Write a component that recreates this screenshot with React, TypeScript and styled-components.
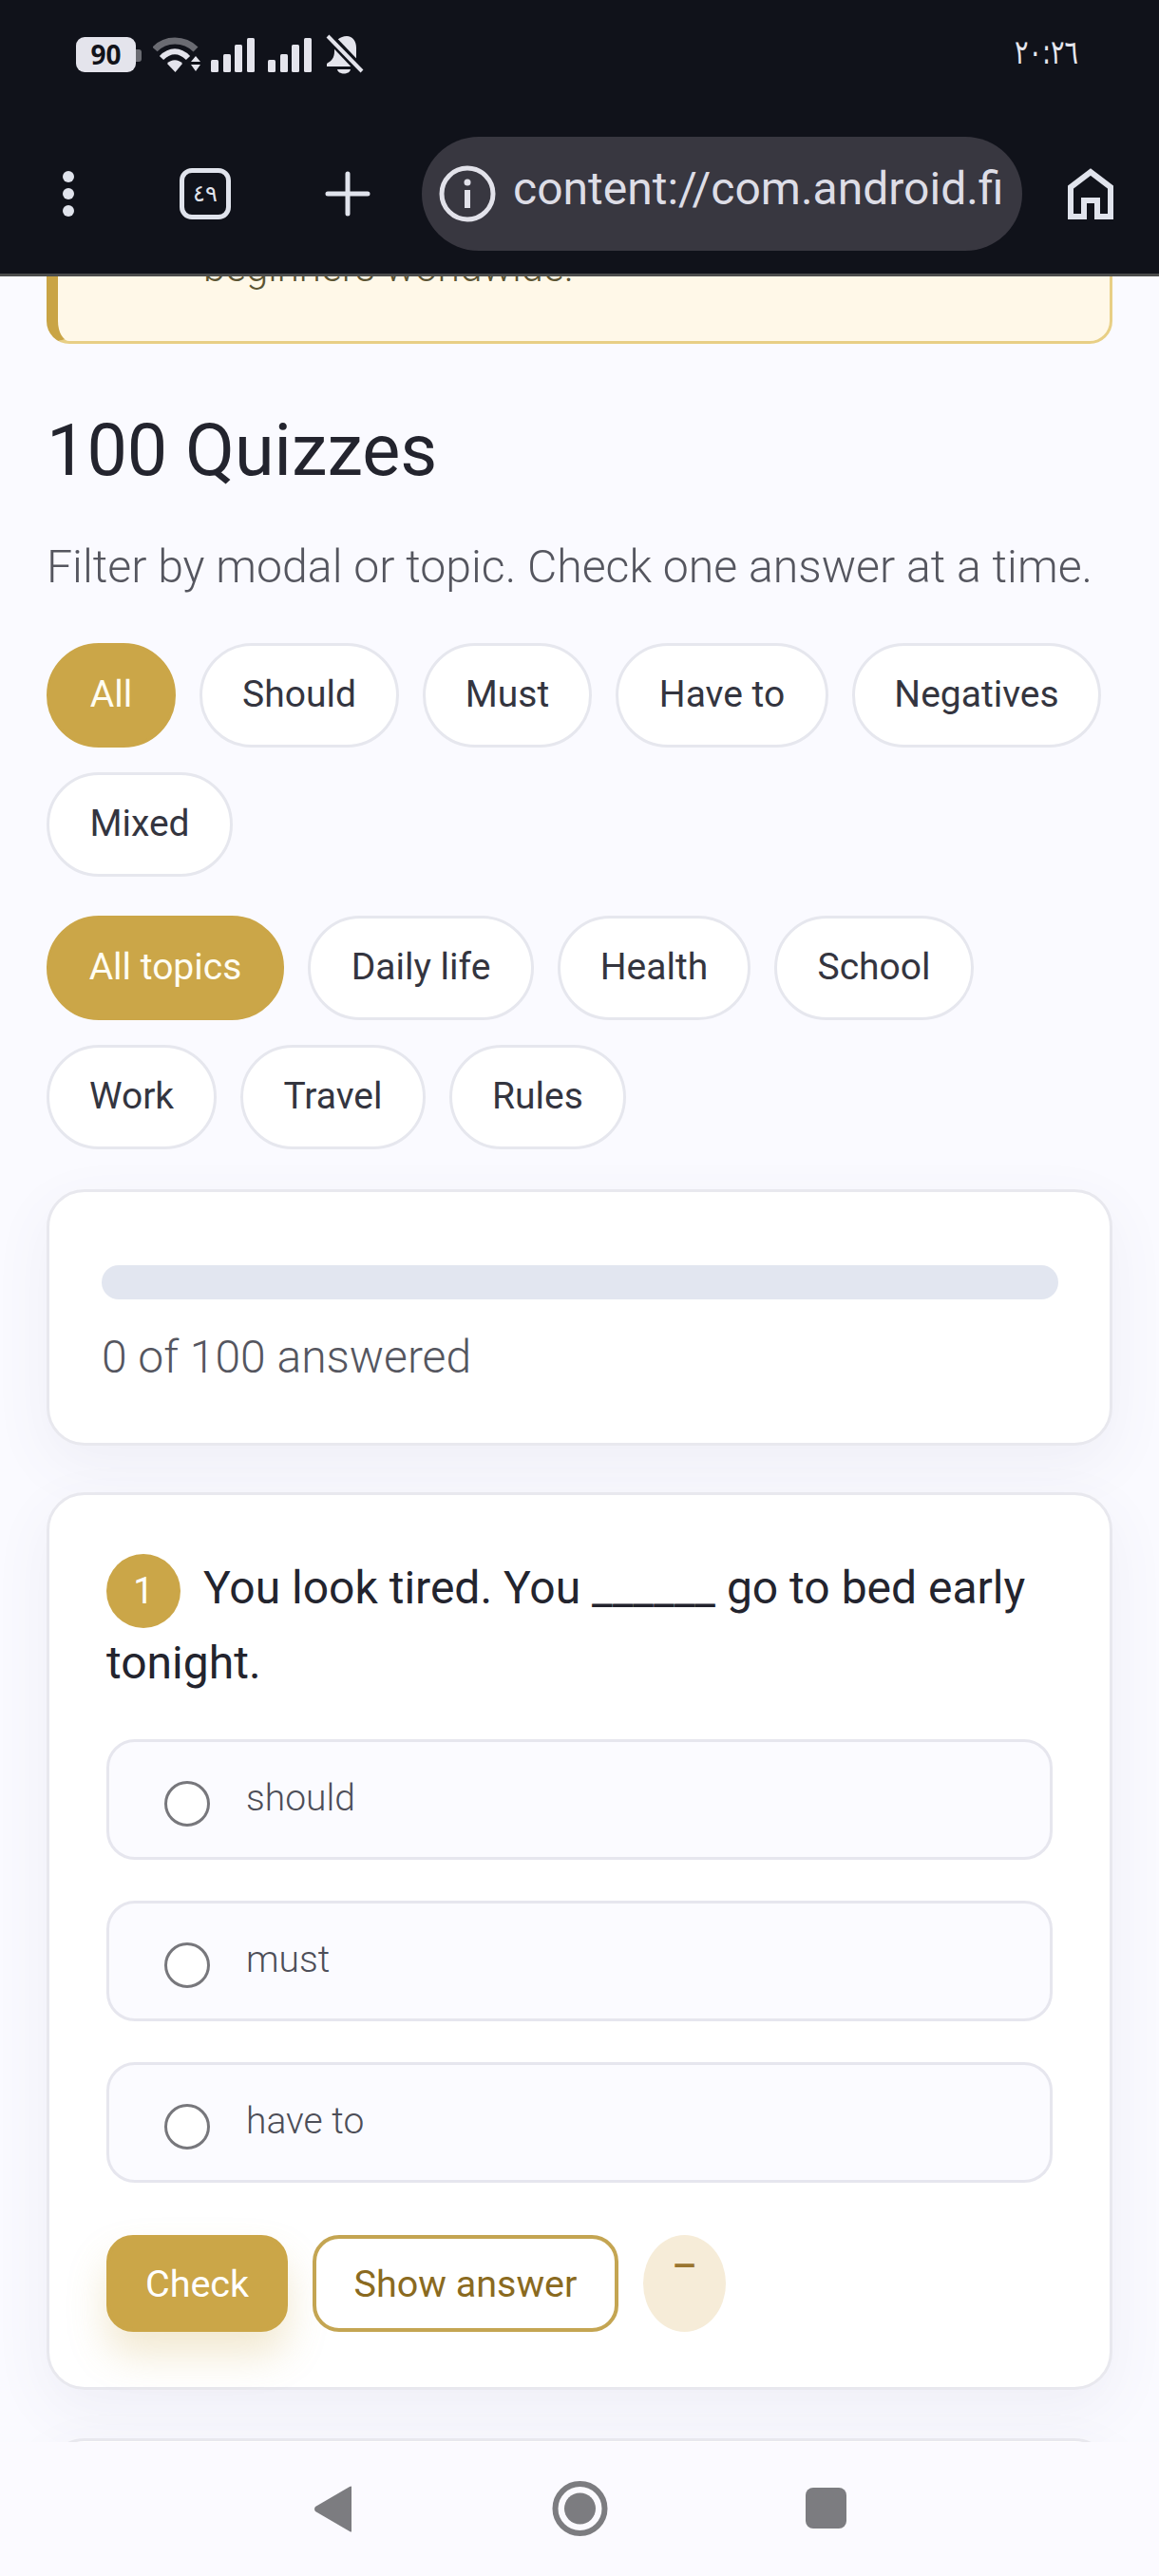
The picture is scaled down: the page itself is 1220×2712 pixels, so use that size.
import React from 'react';
import styled, { createGlobalStyle } from 'styled-components';

const GlobalStyle = createGlobalStyle`
	html, body {
		margin: 0;
		padding: 0;
		background: #fafaff;
	}
	* {
		box-sizing: border-box;
	}
`;

const Screen = styled.div`
	width: 1220px;
	height: 2712px;
	display: flex;
	flex-direction: column;
	overflow: hidden;
	background: #fafaff;
	font-family: Roboto, 'Liberation Sans', sans-serif;
	color: #23242e;
`;

const Chrome = styled.header`
	flex: 0 0 291px;
	display: flex;
	flex-direction: column;
	background: #10121a;
	border-bottom: 3px solid #4b4c4c;
	position: relative;
	z-index: 2;
`;

const StatusBar = styled.div`
	height: 144px;
	padding: 36px 85px 0 80px;
	display: flex;
	justify-content: space-between;
`;

const StatusIcons = styled.div`
	display: flex;
	align-items: flex-start;
`;

const Battery = styled.div`
	width: 63px;
	height: 37px;
	margin-top: 3px;
	border-radius: 9px;
	background: #e4e4ec;
	color: #12131a;
	font-size: 28px;
	font-weight: 700;
	line-height: 37px;
	text-align: center;
	font-family: 'Noto Sans', sans-serif;
	position: relative;

	&::after {
		content: '';
		position: absolute;
		left: 63px;
		top: 13px;
		width: 6px;
		height: 13px;
		border-radius: 0 3px 3px 0;
		background: #6a6b72;
	}
`;

const Clock = styled.div`
	font-family: 'DejaVu Sans', sans-serif;
	font-size: 27px;
	line-height: 34px;
	margin-top: 12px;
	color: #e6e6ee;
	direction: ltr;
	transform: scaleY(1.3);
`;

const Toolbar = styled.div`
	height: 120px;
	display: flex;
	align-items: center;
	padding: 0 48px 0 60px;
`;

const Kebab = styled.div`
	width: 24px;
	display: flex;
	flex-direction: column;
	align-items: center;
	gap: 6px;
	margin-right: 105px;

	span {
		width: 12px;
		height: 12px;
		border-radius: 50%;
		background: #e0e3ec;
	}
`;

const TabCount = styled.div`
	width: 54px;
	height: 54px;
	border: 5px solid #e0e3ec;
	border-radius: 13px;
	display: flex;
	align-items: center;
	justify-content: center;
	color: #e0e3ec;
	font-family: 'DejaVu Sans', sans-serif;
	font-size: 24px;
	margin-right: 99px;
`;

const UrlPill = styled.div`
	width: 632px;
	height: 120px;
	margin-left: 54px;
	margin-right: 48px;
	border-radius: 60px;
	background: #383740;
	display: flex;
	align-items: center;
	padding-left: 18px;
	gap: 18px;
	overflow: hidden;
	color: #dddde6;
	font-size: 48px;
	white-space: nowrap;

	span {
		margin-top: -11px;
	}
`;

const Main = styled.main`
	flex: 1;
	min-height: 0;
	overflow: hidden;
	padding: 0 49px;
`;

const Banner = styled.div`
	height: 110px;
	margin-top: -39px;
	padding: 3px 0 0 153px;
	background: #fff8e8;
	border: 3px solid #e8cf85;
	border-left: 12px solid #c9a445;
	border-radius: 24px;
	font-size: 42px;
	font-weight: 300;
	line-height: 48px;
	color: #5b5433;
`;

const Title = styled.h2`
	margin: 67px 0 0;
	font-size: 75.5px;
	font-weight: 400;
	line-height: 90px;
	color: #23242e;
`;

const Lead = styled.p`
	margin: 48px 0 0;
	font-size: 48.2px;
	font-weight: 300;
	line-height: 60px;
	color: #55565f;
`;

const ChipRow = styled.div<{ $top: number }>`
	display: flex;
	flex-wrap: wrap;
	gap: 26px 25px;
	margin-top: ${(p) => p.$top}px;
`;

const Chip = styled.div<{ $on?: boolean; $w: number }>`
	width: ${(p) => p.$w}px;
	height: 110px;
	border-radius: 55px;
	display: flex;
	align-items: center;
	justify-content: center;
	padding-bottom: 2px;
	font-size: 39px;
	font-weight: 400;
	border: 3px solid ${(p) => (p.$on ? '#cba648' : '#e6e7ee')};
	background: ${(p) => (p.$on ? '#cba648' : '#ffffff')};
	color: ${(p) => (p.$on ? '#fffdf2' : '#34353f')};
`;

const Card = styled.section`
	background: #fff;
	border: 3px solid #e8e8ee;
	border-radius: 40px;
	box-shadow: 0 20px 60px rgba(90, 90, 130, 0.07);
`;

const ProgressCard = styled(Card)`
	height: 270px;
	margin-top: 42px;
	padding: 77px 54px 0 55px;
`;

const Track = styled.div`
	height: 36px;
	border-radius: 18px;
	background: #e2e6f0;
`;

const ProgressText = styled.div`
	margin-top: 31px;
	font-size: 48px;
	font-weight: 300;
	line-height: 60px;
	color: #55565f;
`;

const QuizCard = styled(Card)`
	height: 945px;
	margin-top: 49px;
	padding: 58px 60px 0;
`;

const NextCard = styled(Card)`
	height: 120px;
	margin-top: 51px;
`;

const Question = styled.div`
	font-size: 48px;
	font-weight: 400;
	line-height: 79px;
	color: #23242e;
`;

const Badge = styled.span`
	display: inline-flex;
	width: 78px;
	height: 78px;
	margin: -12px 24px -12px 0;
	border-radius: 50%;
	background: #cba648;
	align-items: center;
	justify-content: center;
	vertical-align: middle;
	color: #fff;
	font-size: 38px;
`;

const Options = styled.div`
	display: flex;
	flex-direction: column;
	gap: 43px;
	margin-top: 41px;
`;

const Option = styled.div`
	height: 127px;
	display: flex;
	align-items: center;
	gap: 38px;
	padding: 0 0 0 58px;
	background: #fbfbff;
	border: 3px solid #e6e6ee;
	border-radius: 30px;
	font-size: 39px;
	font-weight: 300;
	color: #4d4e58;
`;

const Radio = styled.span`
	width: 48px;
	height: 48px;
	margin-top: 9px;
	border-radius: 50%;
	border: 3px solid #77777c;
	background: #fff;
`;

const OptionText = styled.span`
	margin-top: -3px;
`;

const Actions = styled.div`
	display: flex;
	gap: 26px;
	margin-top: 55px;
`;

const Button = styled.div<{ $primary?: boolean; $w: number }>`
	width: ${(p) => p.$w}px;
	height: 102px;
	border-radius: 28px;
	display: flex;
	align-items: center;
	justify-content: center;
	font-size: 39.5px;
	font-weight: 400;
	border: 4px solid ${(p) => (p.$primary ? '#cba648' : '#c4a552')};
	background: ${(p) => (p.$primary ? '#cba648' : '#fff')};
	color: ${(p) => (p.$primary ? '#fff' : '#8a6a20')};
	box-shadow: ${(p) => (p.$primary ? '0 24px 40px rgba(203, 166, 72, 0.25)' : 'none')};
`;

const Hint = styled.div`
	width: 87px;
	height: 102px;
	border-radius: 50%;
	background: #f6ecd8;
	color: #9a7530;
	font-size: 41px;
	font-weight: 500;
	line-height: 64px;
	text-align: center;
`;

const NavBar = styled.nav`
	flex: 0 0 141px;
	background: #fbfaff;
	display: flex;
	align-items: flex-start;
	padding: 41px 0 0 331px;
	position: relative;
	z-index: 2;
`;

const NavIcon = styled.svg`
	display: block;
	fill: #7c7c80;
`;

const Back = styled(NavIcon)`
	margin-top: 5px;
	margin-right: 211px;
`;

const Recent = styled(NavIcon)`
	margin-top: 7px;
	margin-left: 208px;
`;

const WifiIcon = () => (
	<svg width="51" height="37" viewBox="0 0 51 37" style={{ marginLeft: 18, marginTop: 3 }}>
		<path d="M2 13 C13 1 33 1 45 13" fill="none" stroke="#6a6b72" strokeWidth="7" />
		<path d="M9 22 C18 13 28 13 37 22" fill="none" stroke="#e4e4ec" strokeWidth="6" />
		<path d="M15 28 L23.500 37 L31 28 C27 23 19 23 15 28 Z" fill="#e4e4ec" />
		<path d="M40 26 L50 26 L45 20 Z M40 29 L50 29 L45 36 Z" fill="#e4e4ec" />
	</svg>
);

const SignalIcon = ({ left }: { left: number }) => (
	<svg width="46" height="37" viewBox="0 0 46 37" fill="#e4e4ec" style={{ marginLeft: left, marginTop: 4 }}>
		<rect x="0" y="23" width="8" height="13" rx="1.500" />
		<rect x="13" y="17" width="8" height="19" rx="1.500" />
		<rect x="25" y="7" width="8" height="29" rx="1.500" />
		<rect x="38" y="0" width="8" height="36" rx="1.500" />
	</svg>
);

const BellOffIcon = () => (
	<svg width="40" height="43" viewBox="0 0 40 43" fill="#e4e4ec" style={{ marginLeft: 15 }}>
		<path d="M22 2 C28 2 32 7 32 14 V26 L35 31 V34 H1 V31 C6 28 9 25 9 18 V13 C9 7 15 2 22 2 Z" />
		<path d="M12 37 H26 C25 43 13 43 12 37 Z" />
		<path d="M-2 -3 L38 39" stroke="#10121a" strokeWidth="10" />
		<path d="M2 2 L38 39" stroke="#e4e4ec" strokeWidth="4" />
	</svg>
);

const App: React.FC = () => {
	return (
		<Screen>
			<GlobalStyle />
			<Chrome>
				<StatusBar>
					<StatusIcons>
						<Battery>90</Battery>
						<WifiIcon />
						<SignalIcon left={10} />
						<SignalIcon left={14} />
						<BellOffIcon />
					</StatusIcons>
					<Clock>٢٠:٢٦</Clock>
				</StatusBar>
				<Toolbar>
					<Kebab>
						<span />
						<span />
						<span />
					</Kebab>
					<TabCount>٤٩</TabCount>
					<svg width="48" height="48" viewBox="0 0 48 48" stroke="#e0e3ec" strokeWidth="5" strokeLinecap="round">
						<path d="M3 24 H45 M24 3 V45" />
					</svg>
					<UrlPill>
						<svg width="60" height="60" viewBox="0 0 60 60" fill="none" style={{ flexShrink: 0 }}>
							<circle cx="30" cy="30" r="27" stroke="#e2e2ea" strokeWidth="5" />
							<circle cx="30" cy="18" r="3.500" fill="#e2e2ea" />
							<rect x="27" y="26" width="6" height="19" fill="#e2e2ea" />
						</svg>
						<span>content://com.android.fi</span>
					</UrlPill>
					<svg width="48" height="54" viewBox="0 0 48 54" fill="none" stroke="#e0e3ec" strokeWidth="6" style={{ flexShrink: 0 }}>
						<path d="M3 51 V20 L24 4 L45 20 V51 H31 V34 H17 V51 Z" />
					</svg>
				</Toolbar>
			</Chrome>
			<Main>
				<Banner>beginners worldwide.</Banner>
				<Title>100 Quizzes</Title>
				<Lead>Filter by modal or topic. Check one answer at a time.</Lead>
				<ChipRow $top={50}>
					<Chip $on $w={136}>All</Chip>
					<Chip $w={210}>Should</Chip>
					<Chip $w={178}>Must</Chip>
					<Chip $w={224}>Have to</Chip>
					<Chip $w={262}>Negatives</Chip>
					<Chip $w={196}>Mixed</Chip>
				</ChipRow>
				<ChipRow $top={41}>
					<Chip $on $w={250}>All topics</Chip>
					<Chip $w={238}>Daily life</Chip>
					<Chip $w={203}>Health</Chip>
					<Chip $w={210}>School</Chip>
					<Chip $w={179}>Work</Chip>
					<Chip $w={195}>Travel</Chip>
					<Chip $w={186}>Rules</Chip>
				</ChipRow>
				<ProgressCard>
					<Track />
					<ProgressText>0 of 100 answered</ProgressText>
				</ProgressCard>
				<QuizCard>
					<Question>
						<Badge>1</Badge>
						You look tired. You ______ go to bed early tonight.
					</Question>
					<Options>
						<Option><Radio /><OptionText>should</OptionText></Option>
						<Option><Radio /><OptionText>must</OptionText></Option>
						<Option><Radio /><OptionText>have to</OptionText></Option>
					</Options>
					<Actions>
						<Button $primary $w={191}>Check</Button>
						<Button $w={322}>Show answer</Button>
						<Hint>–</Hint>
					</Actions>
				</QuizCard>
				<NextCard />
			</Main>
			<NavBar>
				<Back width="39" height="49" viewBox="0 0 39 49">
					<path d="M39 1 V48 Q39 49 37 48 L1 27 Q-1 24.500 1 22 L37 1 Q39 0 39 1 Z" />
				</Back>
				<svg width="59" height="58" viewBox="0 0 59 58">
					<circle cx="29.500" cy="29" r="26" fill="none" stroke="#7c7c80" strokeWidth="6" />
					<circle cx="29.500" cy="29" r="16.500" fill="#7c7c80" />
				</svg>
				<Recent width="43" height="43" viewBox="0 0 43 43">
					<rect width="43" height="43" rx="8" />
				</Recent>
			</NavBar>
		</Screen>
	);
};

export default App;
